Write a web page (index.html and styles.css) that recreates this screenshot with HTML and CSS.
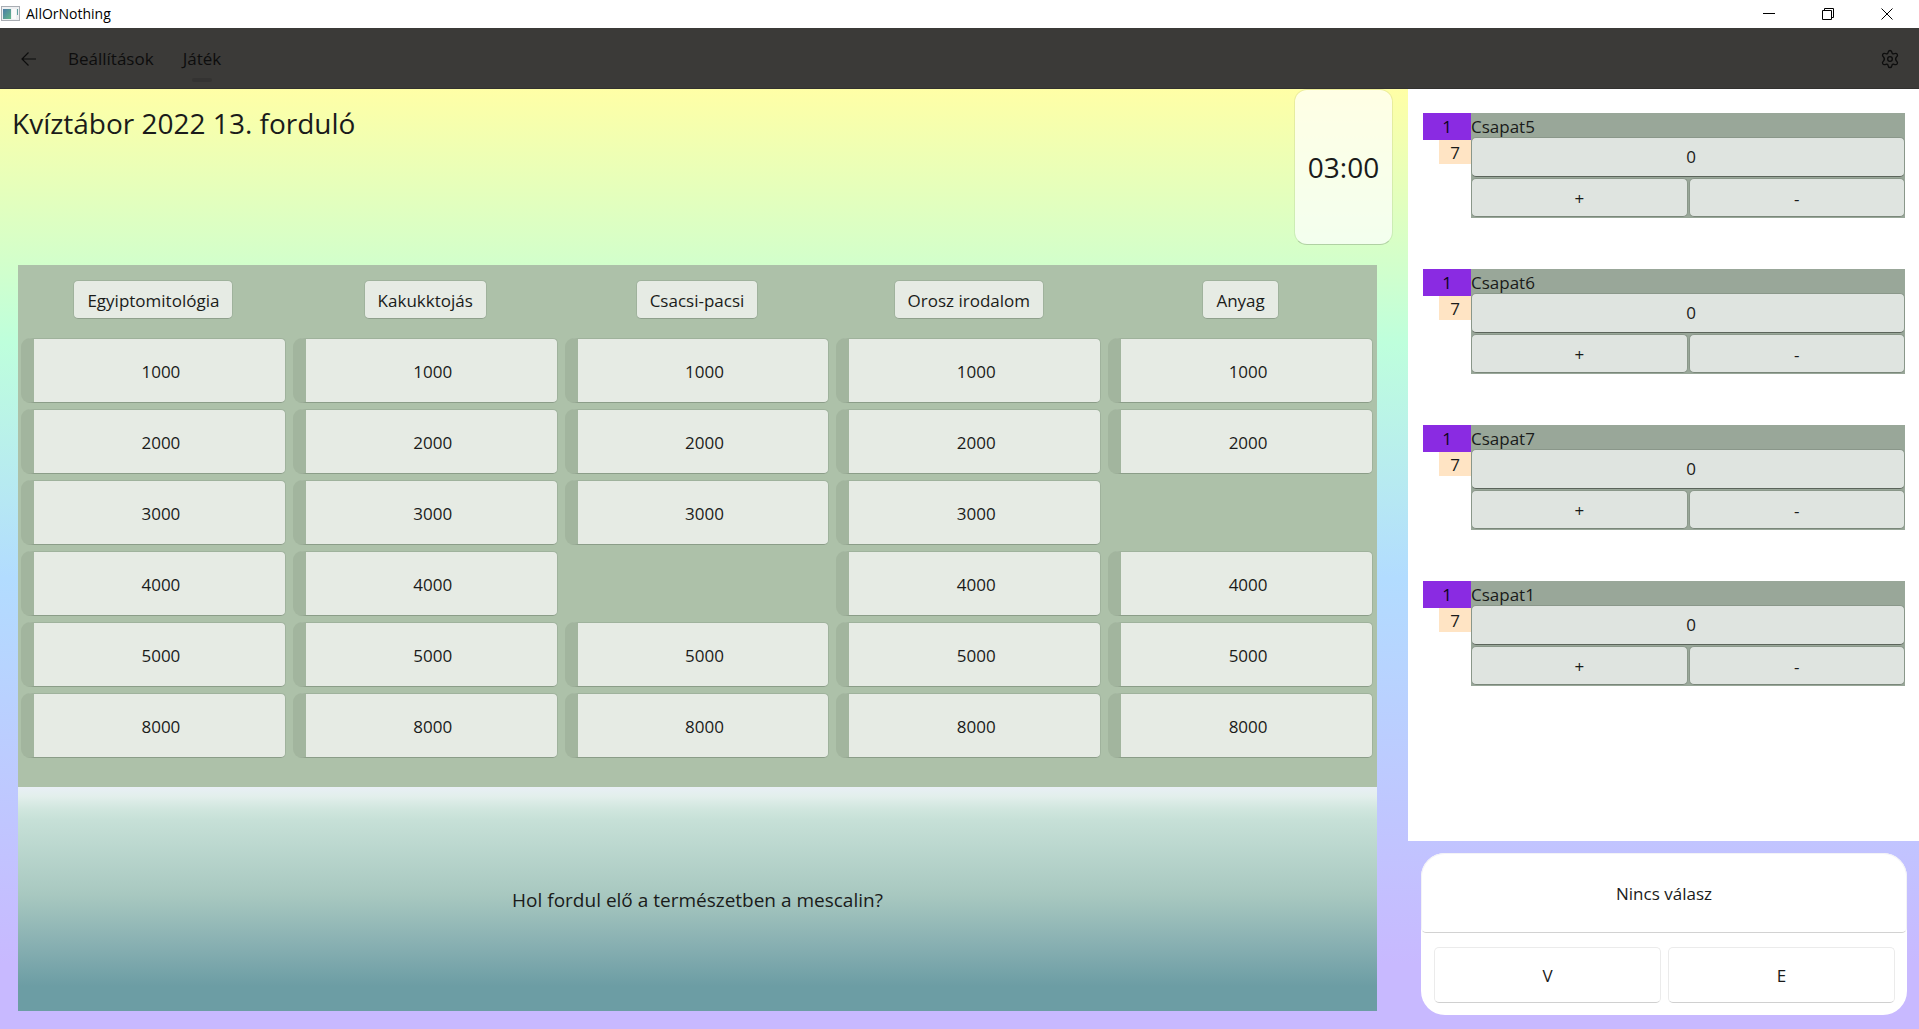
FILE: index.html
```html
<!DOCTYPE html>
<html lang="hu">
<head>
<meta charset="utf-8">
<title>AllOrNothing</title>
<link rel="stylesheet" href="styles.css">
</head>
<body>
<header class="titlebar">
  <svg class="app-icon" width="20" height="18" viewBox="0 0 20 18" aria-hidden="true">
    <defs><linearGradient id="pane" x1="0" y1="0" x2="1" y2="1"><stop offset="0" stop-color="#4a7ba6"/><stop offset="1" stop-color="#63b889"/></linearGradient></defs>
    <rect x="0.5" y="1.500" width="18" height="14" fill="#eef0f2" stroke="#a9adb3"/>
    <rect x="2" y="4" width="8" height="10" fill="url(#pane)"/>
    <rect x="11" y="4" width="4" height="10" fill="#fafafa"/>
    <rect x="16" y="4" width="1" height="6" fill="#5f9fa0"/>
  </svg>
  <span class="app-name">AllOrNothing</span>
  <div class="window-controls">
    <button class="window-btn" aria-label="Kis méret"><svg width="12" height="12" viewBox="0 0 12 12"><path d="M0 5.5h12"/></svg></button>
    <button class="window-btn" aria-label="Előző méret"><svg width="12" height="12" viewBox="0 0 12 12"><path d="M.5 2.5h9v9h-9zM2.500 2.500v-2h9v9h-2"/></svg></button>
    <button class="window-btn" aria-label="Bezárás"><svg width="12" height="12" viewBox="0 0 12 12"><path d="M.5.5l11 11M11.500.5l-11 11"/></svg></button>
  </div>
</header>
<nav class="navbar">
  <button class="nav-icon" aria-label="Vissza"><svg width="16" height="16" viewBox="0 0 16 16"><path d="M15 8H1M7.500 1.500L1 8l6.500 6.500"/></svg></button>
  <a class="nav-link" href="#settings">Beállítások</a>
  <a class="nav-link active" href="#game">Játék</a>
  <button class="nav-icon gear" aria-label="Beállítások"><svg width="20" height="20" viewBox="0 0 24 24"><path d="M9.600 4.400Q10 1.800 12 1.800T14.400 4.400Q14.700 6.300 16.600 5.700Q19.600 4.400 20.700 6.300T19.800 9.600Q17.600 12 19.800 14.400Q21.700 15.800 20.700 17.700T16.600 18.300Q14.700 17.700 14.400 19.600Q14 22.200 12 22.200T9.600 19.600Q9.300 17.700 7.400 18.300Q4.400 19.600 3.300 17.700T4.200 14.400Q6.400 12 4.200 9.600Q2.300 8.200 3.300 6.300T7.400 5.700Q9.300 6.300 9.600 4.400z"/><circle cx="12" cy="12" r="2.800"/></svg></button>
</nav>
<div class="content">
  <main class="game">
    <div class="game-head">
      <h1 class="title">Kvíztábor 2022 13. forduló</h1>
      <button class="timer">03:00</button>
    </div>
    <section class="stage">
      <div class="board">
        <div class="column"><div class="topic-slot"><button class="topic">Egyiptomitológia</button></div><button class="cell">1000</button><button class="cell">2000</button><button class="cell">3000</button><button class="cell">4000</button><button class="cell">5000</button><button class="cell">8000</button></div>
        <div class="column"><div class="topic-slot"><button class="topic">Kakukktojás</button></div><button class="cell">1000</button><button class="cell">2000</button><button class="cell">3000</button><button class="cell">4000</button><button class="cell">5000</button><button class="cell">8000</button></div>
        <div class="column"><div class="topic-slot"><button class="topic">Csacsi-pacsi</button></div><button class="cell">1000</button><button class="cell">2000</button><button class="cell">3000</button><div class="gone"></div><button class="cell">5000</button><button class="cell">8000</button></div>
        <div class="column"><div class="topic-slot"><button class="topic">Orosz irodalom</button></div><button class="cell">1000</button><button class="cell">2000</button><button class="cell">3000</button><button class="cell">4000</button><button class="cell">5000</button><button class="cell">8000</button></div>
        <div class="column"><div class="topic-slot"><button class="topic">Anyag</button></div><button class="cell">1000</button><button class="cell">2000</button><div class="gone"></div><button class="cell">4000</button><button class="cell">5000</button><button class="cell">8000</button></div>
      </div>
      <p class="question">Hol fordul elő a természetben a mescalin?</p>
    </section>
  </main>
  <aside class="side">
    <div class="teams">
      <article class="team"><div class="tags"><span class="rank">1</span><span class="count">7</span></div><div class="team-card"><h2 class="team-name">Csapat5</h2><button class="score">0</button><div class="steps"><button class="step">+</button><button class="step">-</button></div></div></article>
      <article class="team"><div class="tags"><span class="rank">1</span><span class="count">7</span></div><div class="team-card"><h2 class="team-name">Csapat6</h2><button class="score">0</button><div class="steps"><button class="step">+</button><button class="step">-</button></div></div></article>
      <article class="team"><div class="tags"><span class="rank">1</span><span class="count">7</span></div><div class="team-card"><h2 class="team-name">Csapat7</h2><button class="score">0</button><div class="steps"><button class="step">+</button><button class="step">-</button></div></div></article>
      <article class="team"><div class="tags"><span class="rank">1</span><span class="count">7</span></div><div class="team-card"><h2 class="team-name">Csapat1</h2><button class="score">0</button><div class="steps"><button class="step">+</button><button class="step">-</button></div></div></article>
    </div>
    <div class="answer">
      <button class="answer-main">Nincs válasz</button>
      <div class="verdicts"><button class="verdict">V</button><button class="verdict">E</button></div>
    </div>
  </aside>
</div>
</body>
</html>
```
FILE: styles.css
```css
* { box-sizing: border-box; }

body {
  margin: 0;
  min-height: 100vh;
  display: flex;
  flex-direction: column;
  font-family: "Open Sans", "Noto Sans", sans-serif;
  font-size: 17px;
  line-height: 24px;
  color: #1a1b1a;
}

button {
  font: inherit;
  color: inherit;
  margin: 0;
  padding: 0;
  border: 0;
  background: none;
}

svg { display: block; fill: none; }

.titlebar {
  height: 28px;
  display: flex;
  align-items: center;
  padding-left: 1px;
  background: #fff;
  color: #000;
}
.app-name { margin-left: 5px; font-size: 14px; }
.window-controls { display: flex; margin-left: auto; padding-right: 3px; }
.window-btn { width: 59px; height: 26px; display: grid; place-items: center; }
.window-btn svg { stroke: #000; }

.navbar {
  height: 61px;
  display: flex;
  align-items: center;
  padding: 2px 19px 0 21px;
  background: #3b3a38;
  border-bottom: 1px solid #323130;
  color: #0d0d0d;
}
.nav-icon svg { stroke: #0d0d0d; stroke-width: 1.2; }
.nav-link {
  position: relative;
  margin-left: 31px;
  color: inherit;
  text-decoration: none;
}
.nav-link.active { margin-left: 29px; }
.nav-link.active::after {
  content: "";
  position: absolute;
  left: 50%;
  bottom: -11px;
  width: 20px;
  height: 4px;
  margin-left: -10px;
  border-radius: 2px;
  background: #343332;
}
.gear { margin-left: auto; }
.gear svg { stroke-width: 1.6; }

.content {
  flex: 1;
  display: grid;
  grid-template-columns: minmax(0, 1408fr) minmax(0, 511fr);
  background: linear-gradient(#ffffa6 0%, #beffdc 27%, #b2dcff 52%, #c8b9ff 93%, #c8b9ff 100%);
}

.game { display: flex; flex-direction: column; }
.game-head {
  height: 176px;
  display: flex;
  justify-content: space-between;
  align-items: flex-start;
  padding: 0 15px 0 12px;
}
.title { margin: 14px 0 0; font-size: 28px; line-height: 40px; font-weight: 400; }
.timer {
  width: 99px;
  height: 156px;
  border: 1px solid rgba(0, 0, 0, .07);
  border-bottom-color: rgba(0, 0, 0, .18);
  border-radius: 13px;
  background: rgba(255, 255, 255, .7);
  background-clip: padding-box;
  font-size: 28px;
}

.stage { flex: 1; display: flex; flex-direction: column; margin: 0 31px 18px 18px; }
.board {
  display: grid;
  grid-template-columns: repeat(5, minmax(0, 1fr));
  padding: 15px 0 29px;
  background: #adc1a9;
}
.column { display: flex; flex-direction: column; gap: 6px; padding: 0 4px 0 3px; }
.topic-slot { height: 52px; text-align: center; }
.topic {
  height: 39px;
  padding: 2px 13px 0;
  border: 1px solid #9fb29c;
  border-bottom-color: #8fa08c;
  border-radius: 5px;
  background: #e6ebe4;
}
.cell, .gone { height: 65px; }
.cell {
  padding: 2px 0 0 3px;
  border: 1px solid #9fb29c;
  border-bottom-color: #8b9d88;
  border-left: 13px solid #a2b59e;
  border-radius: 9px 5px 5px 9px;
  background: #e6ebe4;
}
.question {
  flex: 1;
  display: grid;
  place-items: center;
  margin: 0;
  padding-top: 2px;
  font-size: 19px;
  background: linear-gradient(#e8eff5 0%, #e3efec 4%, #d0e6de 10%, #c6e0d7 15%, #a8c8c0 48%, #84adb0 73%, #6c9da4 89%, #6c9da4 100%);
}

.side { display: flex; flex-direction: column; }
.teams {
  flex: 1;
  display: flex;
  flex-direction: column;
  gap: 51px;
  padding: 24px 14px 0 15px;
  background: #fff;
}
.team { display: flex; }
.tags {
  width: 48px;
  display: flex;
  flex-direction: column;
  align-items: flex-end;
  text-align: center;
}
.rank { width: 48px; line-height: 27px; background: #8a2be2; color: #0e0418; }
.count { width: 32px; padding-top: 1px; line-height: 23px; background: #ffe4c4; }
.team-card { flex: 1; padding-bottom: 1px; background: #99a799; }
.team-name { margin: 0; height: 24px; line-height: 27px; font-size: 17px; font-weight: 400; }
.score, .step {
  border: 1px solid #8a978a;
  border-radius: 5px;
  background: #dfe4e0;
}
.score { width: 100%; height: 40px; display: block; padding-left: 6px; border-bottom-color: #5b645b; }
.steps { display: grid; grid-template-columns: 1fr 1fr; gap: 1px; padding-top: 1px; }
.step { height: 39px; padding-top: 2px; border-bottom-color: #7a877a; }

.answer {
  margin: 12px 12px 14px 13px;
  border-radius: 24px;
  background: #fff;
}
.answer-main {
  width: 100%;
  height: 80px;
  display: block;
  padding-top: 2px;
  border: 1px solid #f3f3f6;
  border-bottom-color: #d2d2d2;
  border-radius: 24px 24px 5px 5px;
}
.verdicts { display: grid; grid-template-columns: 1fr 1fr; gap: 7px; padding: 14px 12px 12px 13px; }
.verdict {
  height: 56px;
  padding-top: 2px;
  border: 1px solid #ebebeb;
  border-bottom-color: #d0d0d0;
  border-radius: 5px;
}
```
